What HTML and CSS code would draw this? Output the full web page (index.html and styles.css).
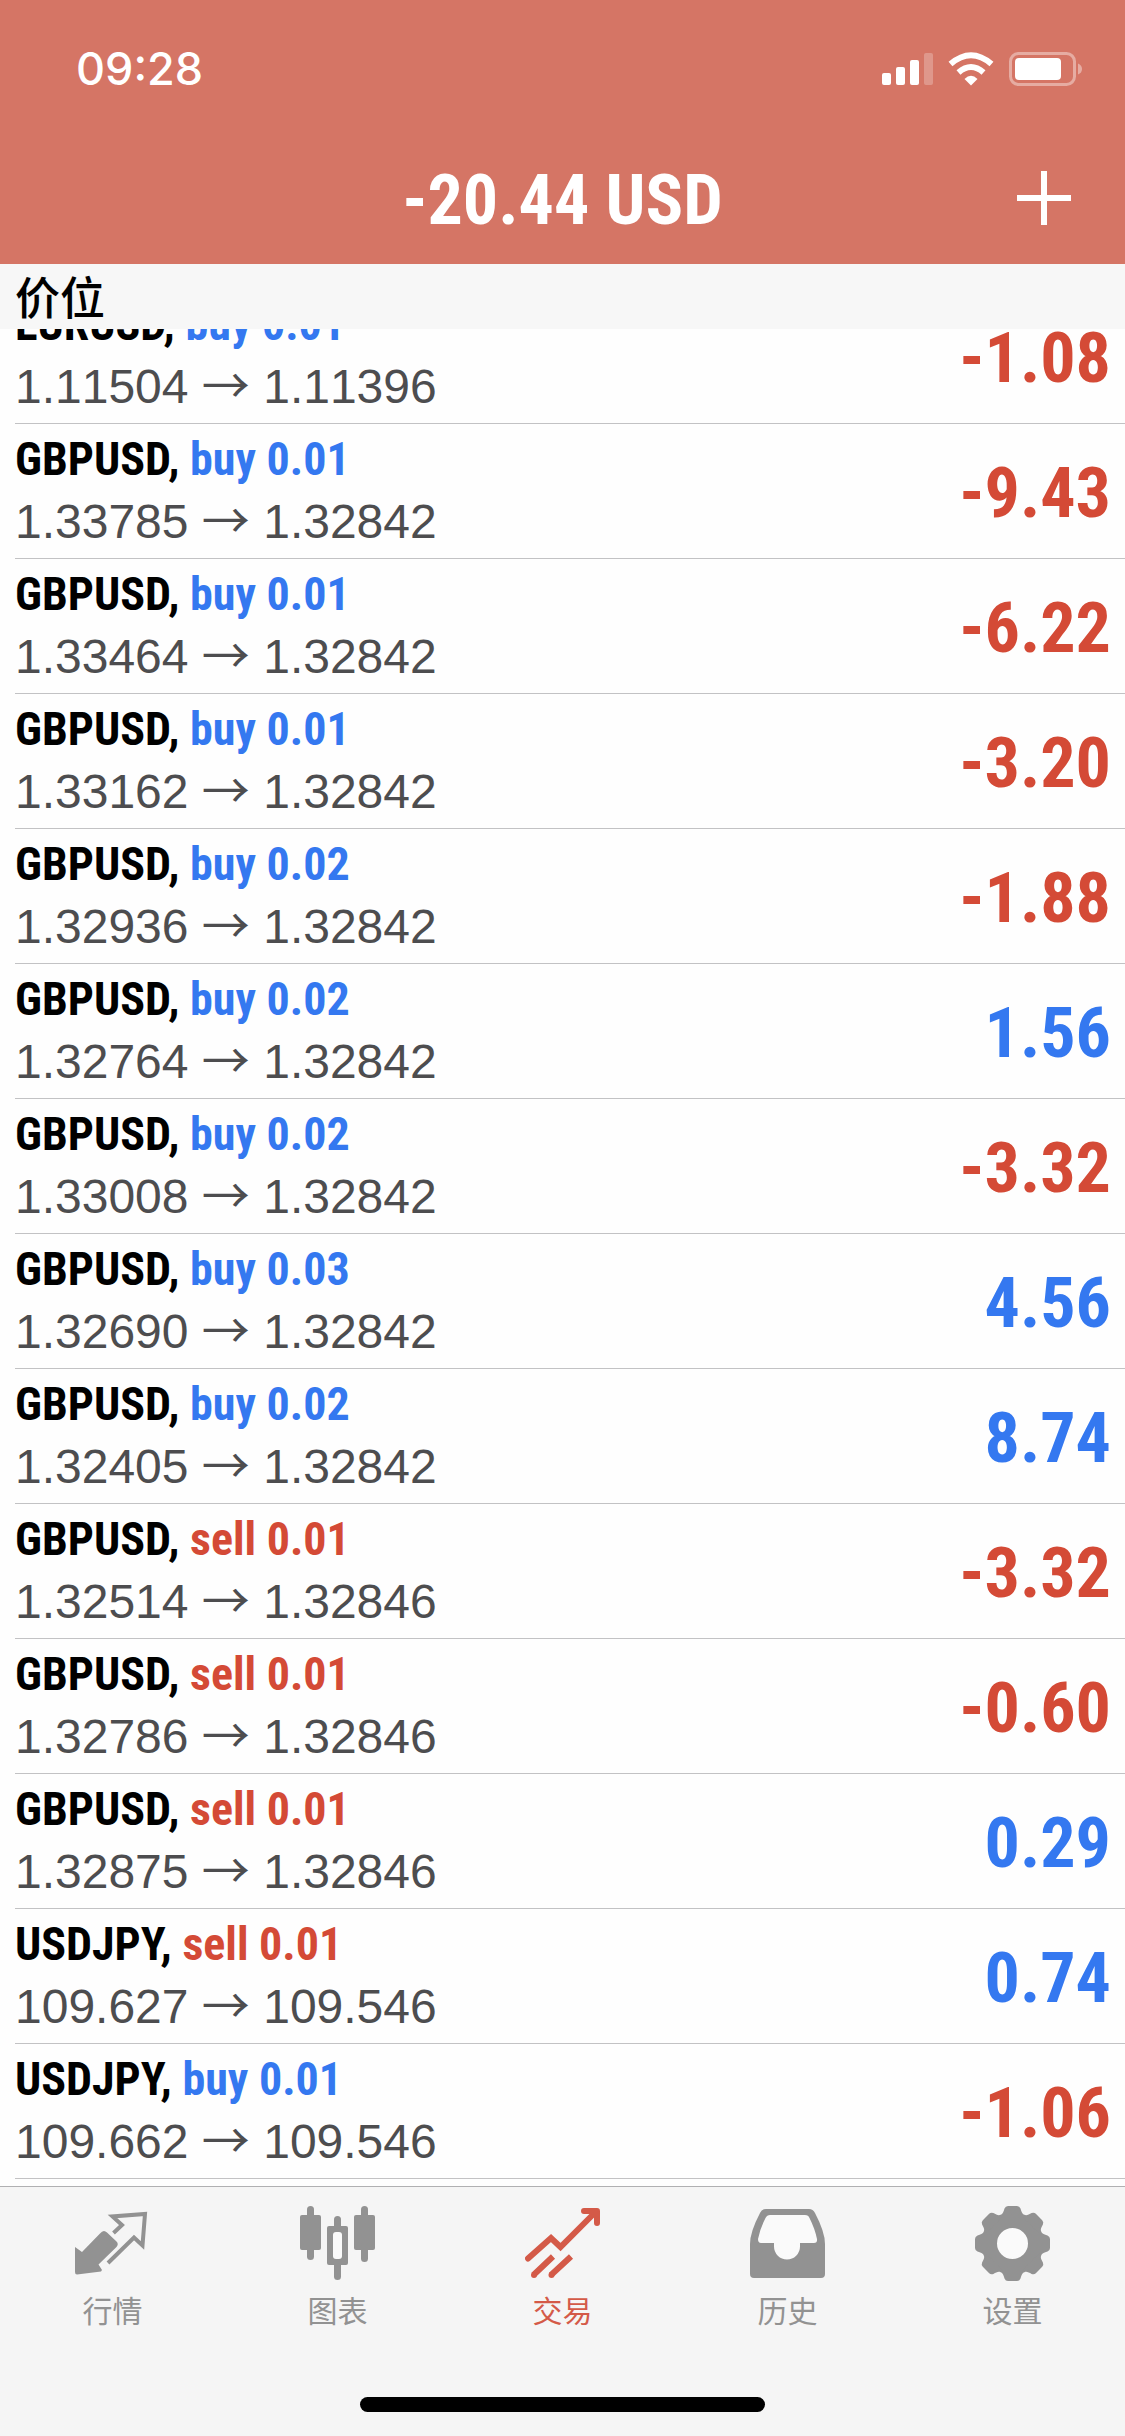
FILE: index.html
```html
<!DOCTYPE html>
<html lang="zh-CN">
<head>
<meta charset="utf-8">
<meta name="viewport" content="width=device-width, initial-scale=1">
<title>交易</title>
<link rel="stylesheet" href="styles.css">
</head>
<body>
<div class="app">
  <header class="top">
    <div class="status">
      <time class="clock">09:28</time>
      <svg class="status-icons" width="202" height="36" viewBox="0 0 202 36" aria-hidden="true">
        <g fill="#fff">
          <rect x="1" y="22" width="9" height="12" rx="2"/>
          <rect x="15" y="16" width="9" height="18" rx="2"/>
          <rect x="29" y="9" width="9" height="25" rx="2"/>
          <rect x="43" y="2" width="9" height="32" rx="2" opacity=".25"/>
          <path d="M90 34.500L83.500 28Q90 21.500 96.500 28Z"/>
          <rect x="134" y="7" width="46" height="22" rx="4"/>
          <path d="M197 12.500Q201 14 201 18T197 23.500Z" opacity=".4"/>
        </g>
        <g fill="none" stroke="#fff" stroke-width="6">
          <path d="M69.500 13Q90 -4.500 110.500 13"/>
          <path d="M77.500 21.500Q90 10.500 102.500 21.500"/>
        </g>
        <rect x="129.500" y="2.500" width="64" height="31" rx="8" fill="none" stroke="#fff" stroke-opacity=".4" stroke-width="3"/>
      </svg>
    </div>
    <div class="titlebar">
      <h1 class="total">-20.44 USD</h1>
      <button class="add" type="button" aria-label="新订单">
        <svg width="56" height="56" viewBox="0 0 56 56" aria-hidden="true"><path d="M28 1V55M1 28H55" stroke="#fff" stroke-width="6"/></svg>
      </button>
    </div>
  </header>
  <h2 class="section">价位</h2>
  <main class="list-wrap">
    <ul class="list">
      <li class="row"><div class="info"><p class="name">EURUSD, <span class="up">buy 0.01</span></p><p class="price">1.11504 <span class="arrow">→</span> 1.11396</p></div><strong class="value down">-1.08</strong></li>
      <li class="row"><div class="info"><p class="name">GBPUSD, <span class="up">buy 0.01</span></p><p class="price">1.33785 <span class="arrow">→</span> 1.32842</p></div><strong class="value down">-9.43</strong></li>
      <li class="row"><div class="info"><p class="name">GBPUSD, <span class="up">buy 0.01</span></p><p class="price">1.33464 <span class="arrow">→</span> 1.32842</p></div><strong class="value down">-6.22</strong></li>
      <li class="row"><div class="info"><p class="name">GBPUSD, <span class="up">buy 0.01</span></p><p class="price">1.33162 <span class="arrow">→</span> 1.32842</p></div><strong class="value down">-3.20</strong></li>
      <li class="row"><div class="info"><p class="name">GBPUSD, <span class="up">buy 0.02</span></p><p class="price">1.32936 <span class="arrow">→</span> 1.32842</p></div><strong class="value down">-1.88</strong></li>
      <li class="row"><div class="info"><p class="name">GBPUSD, <span class="up">buy 0.02</span></p><p class="price">1.32764 <span class="arrow">→</span> 1.32842</p></div><strong class="value up">1.56</strong></li>
      <li class="row"><div class="info"><p class="name">GBPUSD, <span class="up">buy 0.02</span></p><p class="price">1.33008 <span class="arrow">→</span> 1.32842</p></div><strong class="value down">-3.32</strong></li>
      <li class="row"><div class="info"><p class="name">GBPUSD, <span class="up">buy 0.03</span></p><p class="price">1.32690 <span class="arrow">→</span> 1.32842</p></div><strong class="value up">4.56</strong></li>
      <li class="row"><div class="info"><p class="name">GBPUSD, <span class="up">buy 0.02</span></p><p class="price">1.32405 <span class="arrow">→</span> 1.32842</p></div><strong class="value up">8.74</strong></li>
      <li class="row"><div class="info"><p class="name">GBPUSD, <span class="down">sell 0.01</span></p><p class="price">1.32514 <span class="arrow">→</span> 1.32846</p></div><strong class="value down">-3.32</strong></li>
      <li class="row"><div class="info"><p class="name">GBPUSD, <span class="down">sell 0.01</span></p><p class="price">1.32786 <span class="arrow">→</span> 1.32846</p></div><strong class="value down">-0.60</strong></li>
      <li class="row"><div class="info"><p class="name">GBPUSD, <span class="down">sell 0.01</span></p><p class="price">1.32875 <span class="arrow">→</span> 1.32846</p></div><strong class="value up">0.29</strong></li>
      <li class="row"><div class="info"><p class="name">USDJPY, <span class="down">sell 0.01</span></p><p class="price">109.627 <span class="arrow">→</span> 109.546</p></div><strong class="value up">0.74</strong></li>
      <li class="row"><div class="info"><p class="name">USDJPY, <span class="up">buy 0.01</span></p><p class="price">109.662 <span class="arrow">→</span> 109.546</p></div><strong class="value down">-1.06</strong></li>
    </ul>
  </main>
  <footer class="bottom">
    <nav class="tabs">
      <a class="tab" href="#quotes">
        <svg width="75" height="75" viewBox="0 0 75 75" aria-hidden="true">
          <path fill="currentColor" d="M0 41L7 46L25 27.500Q28.500 23 32 26.500L41.500 35.500Q44 38 41.500 41L23.500 58.500L27 64L26 65.500L2 68.500Q0 68.500 0 66Z"/>
          <path fill="none" stroke="currentColor" stroke-width="4" d="M38.500 27L47 19L37.500 10.500L70 8L67.500 39.500L59 31.500L33 57"/>
        </svg>
        <span>行情</span>
      </a>
      <a class="tab" href="#chart">
        <svg width="75" height="75" viewBox="0 0 75 75" aria-hidden="true">
          <g fill="currentColor">
            <rect x="7" y="0" width="7" height="54" rx="3.500"/><rect x="0" y="9" width="21" height="35" rx="2"/>
            <rect x="61" y="0" width="7" height="56" rx="3.500"/><rect x="54" y="9" width="21" height="35" rx="2"/>
            <rect x="34" y="10" width="7" height="64" rx="3.500"/><rect x="27" y="20" width="21" height="39" rx="2"/>
          </g>
          <rect x="33" y="26" width="9" height="27" rx="3" fill="#fafafa"/>
        </svg>
        <span>图表</span>
      </a>
      <a class="tab active" href="#trade" aria-current="page">
        <svg width="75" height="75" viewBox="0 0 75 75" aria-hidden="true">
          <g fill="none" stroke="currentColor" stroke-width="6">
            <path stroke-linecap="round" d="M3 52.500L26 32L35.500 41L70 6.500"/>
            <path stroke-linecap="round" stroke-linejoin="round" d="M59 5H72V17"/>
            <path d="M8.500 69L28 50.500M26 69L46 50.500"/>
          </g>
          <g fill="currentColor"><circle cx="9" cy="69" r="3"/><circle cx="26.500" cy="69" r="3"/></g>
        </svg>
        <span>交易</span>
      </a>
      <a class="tab" href="#history">
        <svg width="75" height="75" viewBox="0 0 75 75" aria-hidden="true">
          <path fill="#fafafa" d="M14 8H61L69 40L52 56H22L6 40Z"/>
          <path fill="currentColor" fill-rule="evenodd" d="M16 3H59Q63 3 65 7Q75 26 75 38V68Q75 72 71 72H4Q0 72 0 68V38Q0 26 10 7Q12 3 16 3ZM20 9Q17 9 15.500 12Q10 23 8 33Q8 37 11 37H24V40.500A13 13 0 0 0 50 40.500V37H64Q67.500 37 67 33Q65 23 59.500 12Q58.500 9 55 9Z"/>
        </svg>
        <span>历史</span>
      </a>
      <a class="tab" href="#settings">
        <svg width="75" height="75" viewBox="-37.500 -37.500 75 75" aria-hidden="true">
          <defs><path id="tooth" d="M-12 -26V-28.600C-9.500 -29.500 -9 -32 -8 -35Q-7 -37.500 -4.500 -37.500H4.500Q7 -37.500 8 -35C9 -32 9.500 -29.500 12 -28.600V-26Z"/></defs>
          <circle r="23" fill="#fafafa" stroke="currentColor" stroke-width="15"/>
          <g fill="currentColor">
            <use href="#tooth"/><use href="#tooth" transform="rotate(45)"/><use href="#tooth" transform="rotate(90)"/><use href="#tooth" transform="rotate(135)"/>
            <use href="#tooth" transform="rotate(180)"/><use href="#tooth" transform="rotate(225)"/><use href="#tooth" transform="rotate(270)"/><use href="#tooth" transform="rotate(315)"/>
          </g>
        </svg>
        <span>设置</span>
      </a>
    </nav>
    <div class="home-indicator"></div>
  </footer>
</div>
</body>
</html>
```
FILE: styles.css
```css
* {
  box-sizing: border-box;
}

body {
  margin: 0;
  background: #fefefe;
  font-family: "Liberation Sans", "Noto Sans CJK SC", sans-serif;
}

h1, h2, p, ul {
  margin: 0;
  padding: 0;
  font-weight: normal;
}

.app {
  display: flex;
  flex-direction: column;
  height: 100vh;
}

.top {
  flex: none;
  background: #d57565;
  color: #fff;
}

.status {
  display: flex;
  justify-content: space-between;
  align-items: center;
  padding: 41px 42px 35px 76px;
}

.clock {
  font: 500 45px/56px Inter, sans-serif;
}

.status-icons {
  display: block;
}

.titlebar {
  display: grid;
  grid-template-columns: 1fr auto 1fr;
  align-items: center;
  height: 132px;
  padding: 0 53px;
}

.total {
  grid-column: 2;
  padding-top: 3px;
  font: bold 70px/80px "Roboto Condensed", "Liberation Sans Narrow", sans-serif;
}

.add {
  grid-column: 3;
  justify-self: end;
  padding: 0;
  border: 0;
  background: none;
}

.add svg {
  display: block;
}

.section {
  flex: none;
  padding: 0 15px 2px;
  background: #f7f7f7;
  color: #000;
  font: 500 45px/63px "Noto Sans CJK SC", sans-serif;
}

/* Scrolled to its end: rows that do not fit are cut at the top edge. */
.list-wrap {
  display: flex;
  flex: 1;
  flex-direction: column;
  justify-content: flex-end;
  min-height: 0;
  overflow: hidden;
  padding-bottom: 7px;
}

.list {
  flex: none;
  padding-left: 15px;
  list-style: none;
}

.row {
  display: flex;
  justify-content: space-between;
  align-items: center;
  padding: 6px 14px 2px 0;
  border-bottom: 1px solid #c2c2c4;
}

.name {
  color: #000;
  font: bold 46px/58px "Roboto Condensed", "Liberation Sans Narrow", sans-serif;
}

.price {
  color: #4d4d4f;
  font-size: 48px;
  font-kerning: none;
  line-height: 68px;
}

.arrow {
  font-family: "Noto Sans CJK SC", sans-serif;
  line-height: 1;
}

.value {
  font: bold 70px/80px "Roboto Condensed", "Liberation Sans Narrow", sans-serif;
}

.up {
  color: #3478f0;
}

.down {
  color: #d44a36;
}

.bottom {
  flex: none;
  border-top: 1px solid #b0b0b2;
  background: #f5f5f5;
}

.tabs {
  display: flex;
  padding-top: 19px;
}

.tab {
  display: flex;
  flex: 1;
  flex-direction: column;
  align-items: center;
  gap: 6px;
  color: #929292;
  font: 30px/44px "Noto Sans CJK SC", sans-serif;
  text-decoration: none;
}

.tab.active {
  color: #d45a48;
}

.home-indicator {
  width: 36%;
  height: 15px;
  margin: 66px auto 24px;
  border-radius: 8px;
  background: #000;
}
```
